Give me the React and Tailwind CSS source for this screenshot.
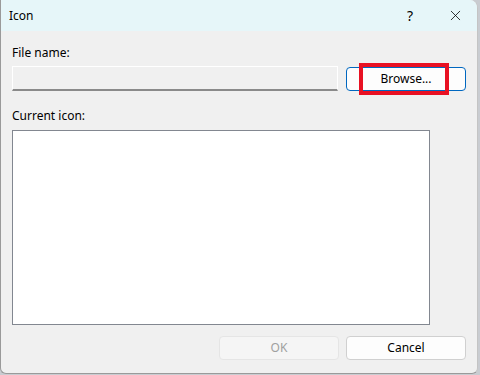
import { X } from "lucide-react";

const font = { fontFamily: '"Segoe UI", "Noto Sans", "Open Sans", sans-serif' };

const App = () => {
    return (
        <div className="w-[480px] h-[375px] bg-[#c9ccd1] overflow-hidden" style={font}>
            <div className="w-[478px] h-[374px] flex flex-col bg-[#f0f0f0] border-l border-[#9a9a9a] border-b border-r border-r-[#c4c4c4] rounded-tr-[8px] rounded-b-[6px] overflow-hidden text-[12px] text-black">
                {/* title bar */}
                <div className="h-[31px] shrink-0 flex items-center bg-[#e6f6f9]">
                    <span className="pl-[8px] text-[12px]">Icon</span>
                    <div className="ml-auto flex items-center h-full">
                        <div className="w-[46px] h-full flex items-center justify-center text-[14px] pl-[4px]">?</div>
                        <div className="w-[46px] h-full flex items-center justify-center pl-[2px]">
                            <X size={17} strokeWidth={1.1} />
                        </div>
                    </div>
                </div>

                <div className="flex flex-col px-[11px] pt-[14px]">
                    <span className="leading-[16px]">File name:</span>
                    <div className="flex items-center gap-[8px] mt-[5px]">
                        <div className="w-[326px] h-[25px] bg-[#f0f0f0] border border-white border-b-2 border-b-[#8a8a8a]" />
                        <div className="relative">
                            <button className="w-[120px] h-[24px] bg-[#fdfdfd] border border-[#0067c0] rounded-[4px] text-[12px]">
                                Browse...
                            </button>
                            <div className="absolute left-[13px] top-[-4px] w-[90px] h-[32px] border-[4px] border-[#e81123]" />
                        </div>
                    </div>

                    <span className="leading-[16px] mt-[17px]">Current icon:</span>
                    <div className="w-[418px] h-[195px] mt-[6px] bg-white border border-[#828790]" />

                    <div className="flex justify-end gap-[7px] mt-[11px]">
                        <button className="w-[120px] h-[24px] bg-[#f5f5f5] border border-[#e5e5e5] rounded-[4px] text-[#a0a0a0] text-[12px]">
                            OK
                        </button>
                        <button className="w-[120px] h-[24px] bg-[#fdfdfd] border border-[#d0d0d0] rounded-[4px] text-[12px]">
                            Cancel
                        </button>
                    </div>
                </div>
            </div>
        </div>
    );
};

export default App;
